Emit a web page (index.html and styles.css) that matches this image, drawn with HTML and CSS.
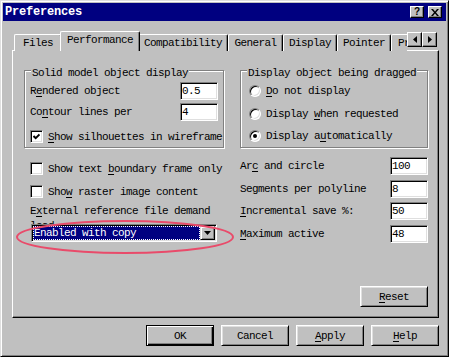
FILE: index.html
```html
<!DOCTYPE html>
<html lang="en">
<head>
    <meta charset="UTF-8">
    <meta name="viewport" content="width=device-width, initial-scale=1.0">
    <title>Preferences</title>
    <link rel="stylesheet" href="styles.css">
</head>
<body>
    <div class="window">
        <div class="titlebar">
            <span class="title">Preferences</span>
            <div class="caption-buttons">
                <button class="cap-btn cap-help">?</button>
                <button class="cap-btn">
                    <svg width="8" height="7" viewBox="0 0 8 7"><polygon points="0,0 2,0 4,2.5 6,0 8,0 5,3.5 8,7 6,7 4,4.5 2,7 0,7 3,3.5"/></svg>
                </button>
            </div>
        </div>

        <div class="dialog-body">
            <div class="tabbar">
                <div class="tabs">
                    <div class="tab" style="width: 48px">Files</div>
                    <div class="tab active" style="width: 80px">Performance</div>
                    <div class="tab" style="width: 90px">Compatibility</div>
                    <div class="tab" style="width: 55px">General</div>
                    <div class="tab" style="width: 54px">Display</div>
                    <div class="tab" style="width: 54px">Pointer</div>
                    <div class="tab" style="width: 62px">Profiles</div>
                </div>
                <div class="tab-scroll">
                    <button class="arrow-btn"><svg width="4" height="7" viewBox="0 0 4 7"><path d="M4 0v7L0 3.5z"/></svg></button>
                    <button class="arrow-btn"><svg width="4" height="7" viewBox="0 0 4 7"><path d="M0 0v7l4-3.5z"/></svg></button>
                </div>
            </div>

            <div class="panel">
                <div class="groups">
                    <div class="group">
                        <div class="group-title">Solid model object display</div>
                        <div class="field">
                            <label>R<u>e</u>ndered object</label>
                            <input class="edit" type="text" value="0.5">
                        </div>
                        <div class="field">
                            <label>Co<u>n</u>tour lines per</label>
                            <input class="edit" type="text" value="4">
                        </div>
                        <div class="check-row group-check">
                            <span class="checkbox">
                                <svg width="7" height="7" viewBox="0 0 7 7"><polyline points="0.5,3 2.7,5.2 6.5,1.4" fill="none" stroke="#000" stroke-width="2"/></svg>
                            </span>
                            <span><u>S</u>how silhouettes in wireframe</span>
                        </div>
                    </div>

                    <div class="group">
                        <div class="group-title">Display object being dragged</div>
                        <div class="radio-list">
                            <div class="radio-row"><span class="radio"></span><span><u>D</u>o not display</span></div>
                            <div class="radio-row"><span class="radio"></span><span>Display <u>w</u>hen requested</span></div>
                            <div class="radio-row"><span class="radio checked"></span><span>Display a<u>u</u>tomatically</span></div>
                        </div>
                    </div>
                </div>

                <div class="lower">
                    <div class="lower-left">
                        <div class="check-row first">
                            <span class="checkbox"></span>
                            <span>Show text <u>b</u>oundary frame only</span>
                        </div>
                        <div class="check-row second">
                            <span class="checkbox"></span>
                            <span>Sho<u>w</u> raster image content</span>
                        </div>
                        <div class="ext-label">E<u>x</u>ternal reference file demand load</div>
                        <div class="combo">
                            <span class="combo-value">Enabled with copy</span>
                            <span class="combo-btn"><svg width="7" height="4" viewBox="0 0 7 4"><path d="M0 0h7L3.5 4z"/></svg></span>
                        </div>
                    </div>

                    <div class="lower-right">
                        <div class="field">
                            <label>Ar<u>c</u> and circle</label>
                            <input class="edit" type="text" value="100">
                        </div>
                        <div class="field">
                            <label>Segments per polyline</label>
                            <input class="edit" type="text" value="8">
                        </div>
                        <div class="field">
                            <label><u>I</u>ncremental save %:</label>
                            <input class="edit" type="text" value="50">
                        </div>
                        <div class="field">
                            <label><u>M</u>aximum active</label>
                            <input class="edit" type="text" value="48">
                        </div>
                    </div>
                </div>

                <div class="panel-footer">
                    <button class="btn"><u>R</u>eset</button>
                </div>

                <!-- red marker drawn over the combo box -->
                <svg class="annotation" width="224" height="38" viewBox="0 0 224 38">
                    <ellipse cx="110" cy="19" rx="108" ry="16" fill="none" stroke="#e94b6a" stroke-width="2"/>
                </svg>
            </div>

            <div class="dialog-buttons">
                <button class="btn btn-default">OK</button>
                <button class="btn">Cancel</button>
                <button class="btn"><u>A</u>pply</button>
                <button class="btn"><u>H</u>elp</button>
            </div>
        </div>
    </div>
</body>
</html>
```

FILE: styles.css
```css
body {
    margin: 0;
    background-color: #c0c0c0;
    color: #000000;
    font-family: "Liberation Mono", "DejaVu Sans Mono", monospace;
    font-size: 11px;
    letter-spacing: -0.6px;
}

u {
    text-decoration: underline;
    text-underline-offset: 2px;
}

button,
input {
    font: inherit;
    letter-spacing: inherit;
    color: #000000;
}

.window {
    width: 449px;
    height: 357px;
    box-sizing: border-box;
    display: flex;
    flex-direction: column;
    padding: 2px;
    border: 1px solid;
    border-color: #dfdfdf #000000 #000000 #dfdfdf;
    box-shadow: inset 1px 1px #ffffff, inset -1px -1px #808080;
}

/* title bar */
.titlebar {
    flex-shrink: 0;
    height: 18px;
    display: flex;
    align-items: center;
    padding: 0 4px 0 2px;
    background-color: #000080;
}

.title {
    flex: 1;
    color: #ffffff;
    font-weight: bold;
    font-size: 12px;
    letter-spacing: -0.2px;
}

.caption-buttons {
    display: flex;
    gap: 4px;
}

.cap-btn {
    width: 14px;
    height: 12px;
    box-sizing: border-box;
    padding: 0;
    display: flex;
    align-items: center;
    justify-content: center;
    background-color: #c0c0c0;
    border: 1px solid;
    border-color: #ffffff #000000 #000000 #ffffff;
    box-shadow: inset -1px -1px #808080;
}

.cap-help {
    font-family: "Liberation Sans", Arial, sans-serif;
    font-weight: bold;
    font-size: 10px;
    letter-spacing: 0;
    line-height: 1;
}

/* dialog */
.dialog-body {
    flex: 1;
    display: flex;
    flex-direction: column;
    padding: 10px 7px 8px 9px;
}

.tabbar {
    position: relative;
    z-index: 1;
    display: flex;
    height: 20px;
    padding-left: 2px;
}

.tabs {
    flex: 1;
    display: flex;
    align-items: flex-end;
    overflow: hidden;
}

.tab {
    flex-shrink: 0;
    height: 17px;
    box-sizing: border-box;
    padding-top: 2px;
    line-height: 12px;
    text-align: center;
    white-space: nowrap;
    background-color: #c0c0c0;
    border-top: 1px solid #ffffff;
    border-left: 1px solid #ffffff;
    border-right: 1px solid #000000;
    border-radius: 2px 2px 0 0;
    box-shadow: inset -1px 0 #808080;
}

.tab.active {
    position: relative;
    z-index: 1;
    height: 20px;
    margin: 0 -2px;
}

.tab-scroll {
    align-self: flex-start;
    display: flex;
    margin: 1px 2px 0 0;
}

.arrow-btn {
    width: 15px;
    height: 15px;
    box-sizing: border-box;
    padding: 0;
    display: flex;
    align-items: center;
    justify-content: center;
    background-color: #c0c0c0;
    border: 1px solid;
    border-color: #ffffff #000000 #000000 #ffffff;
    box-shadow: inset -1px -1px #808080;
}

.panel {
    position: relative;
    flex: 1;
    display: flex;
    flex-direction: column;
    margin-top: -1px;
    padding: 19px 10px 10px 11px;
    border: 1px solid;
    border-color: #ffffff #000000 #000000 #ffffff;
    box-shadow: inset -1px -1px #808080;
}

.groups,
.lower {
    display: grid;
    grid-template-columns: 200px 188px;
    column-gap: 16px;
}

.group {
    display: flex;
    flex-direction: column;
    padding: 0 5px 4px 5px;
    border: 1px solid #808080;
    box-shadow: 1px 1px 0 #ffffff, inset 1px 1px 0 #ffffff;
}

.group-title {
    align-self: flex-start;
    margin: -4px 0 0 1px;
    padding: 0 1px;
    line-height: 12px;
    background-color: #c0c0c0;
}

.field {
    display: flex;
    align-items: center;
    justify-content: space-between;
    height: 18px;
    white-space: nowrap;
}

.group .field {
    margin-top: 3px;
}

.edit {
    width: 38px;
    height: 18px;
    box-sizing: border-box;
    padding: 0 1px;
    background-color: #ffffff;
    border: 1px solid;
    border-color: #808080 #ffffff #ffffff #808080;
    box-shadow: inset 1px 1px #000000, inset -1px -1px #dfdfdf;
    outline: none;
}

.check-row {
    display: flex;
    align-items: center;
    gap: 5px;
    height: 13px;
    white-space: nowrap;
}

.group-check {
    margin-top: 9px;
}

.checkbox {
    flex-shrink: 0;
    width: 13px;
    height: 13px;
    box-sizing: border-box;
    display: flex;
    align-items: center;
    justify-content: center;
    background-color: #ffffff;
    border: 1px solid;
    border-color: #808080 #ffffff #ffffff #808080;
    box-shadow: inset 1px 1px #000000, inset -1px -1px #dfdfdf;
}

.radio-list {
    display: flex;
    flex-direction: column;
    gap: 10.5px;
    margin-top: 6px;
}

.radio-row {
    display: flex;
    align-items: center;
    gap: 5px;
    height: 12px;
    padding-left: 3px;
    white-space: nowrap;
}

.radio {
    flex-shrink: 0;
    width: 12px;
    height: 12px;
    box-sizing: border-box;
    display: flex;
    align-items: center;
    justify-content: center;
    border-radius: 50%;
    background-color: #ffffff;
    border: 1px solid;
    border-color: #808080 #ffffff #ffffff #808080;
    box-shadow: inset 1px 1px #000000, inset -1px -1px #dfdfdf;
}

.radio.checked::after {
    content: "";
    width: 4px;
    height: 4px;
    border-radius: 50%;
    background-color: #000000;
}

.lower {
    margin-top: 9px;
}

.lower-left {
    display: flex;
    flex-direction: column;
    padding-left: 6px;
}

.check-row.first {
    margin-top: 5px;
}

.check-row.second {
    margin-top: 10px;
}

/* second line of the label sits mostly under the combo box */
.ext-label {
    margin-top: 6px;
    line-height: 15px;
}

.combo {
    position: relative;
    display: flex;
    width: 186px;
    height: 18px;
    box-sizing: border-box;
    margin: -10px 0 0 1px;
    padding: 1px;
    background-color: #ffffff;
    border: 1px solid;
    border-color: #808080 #ffffff #ffffff #808080;
    box-shadow: inset 1px 1px #000000, inset -1px -1px #dfdfdf;
}

.combo-value {
    flex: 1;
    height: 14px;
    box-sizing: border-box;
    line-height: 12px;
    color: #ffffff;
    background-color: #000080;
    border: 1px dotted #ffffff;
}

.combo-btn {
    width: 15px;
    height: 14px;
    box-sizing: border-box;
    display: flex;
    align-items: center;
    justify-content: center;
    background-color: #c0c0c0;
    border: 1px solid;
    border-color: #dfdfdf #000000 #000000 #dfdfdf;
    box-shadow: inset 1px 1px #ffffff, inset -1px -1px #808080;
}

.lower-right {
    display: flex;
    flex-direction: column;
    gap: 4.67px;
}

.panel-footer {
    margin-top: auto;
    display: flex;
    justify-content: flex-end;
}

.btn {
    width: 68px;
    height: 21px;
    box-sizing: border-box;
    padding: 0;
    background-color: #c0c0c0;
    border: 1px solid;
    border-color: #ffffff #000000 #000000 #ffffff;
    box-shadow: inset 1px 1px #dfdfdf, inset -1px -1px #808080;
}

.btn-default {
    border-color: #000000;
    box-shadow: inset 1px 1px #ffffff, inset -1px -1px #000000, inset -2px -2px #808080;
}

.dialog-buttons {
    flex-shrink: 0;
    display: flex;
    justify-content: flex-end;
    gap: 7px;
    margin-top: 7px;
}

.annotation {
    position: absolute;
    left: 2px;
    top: 167px;
    pointer-events: none;
}
```
